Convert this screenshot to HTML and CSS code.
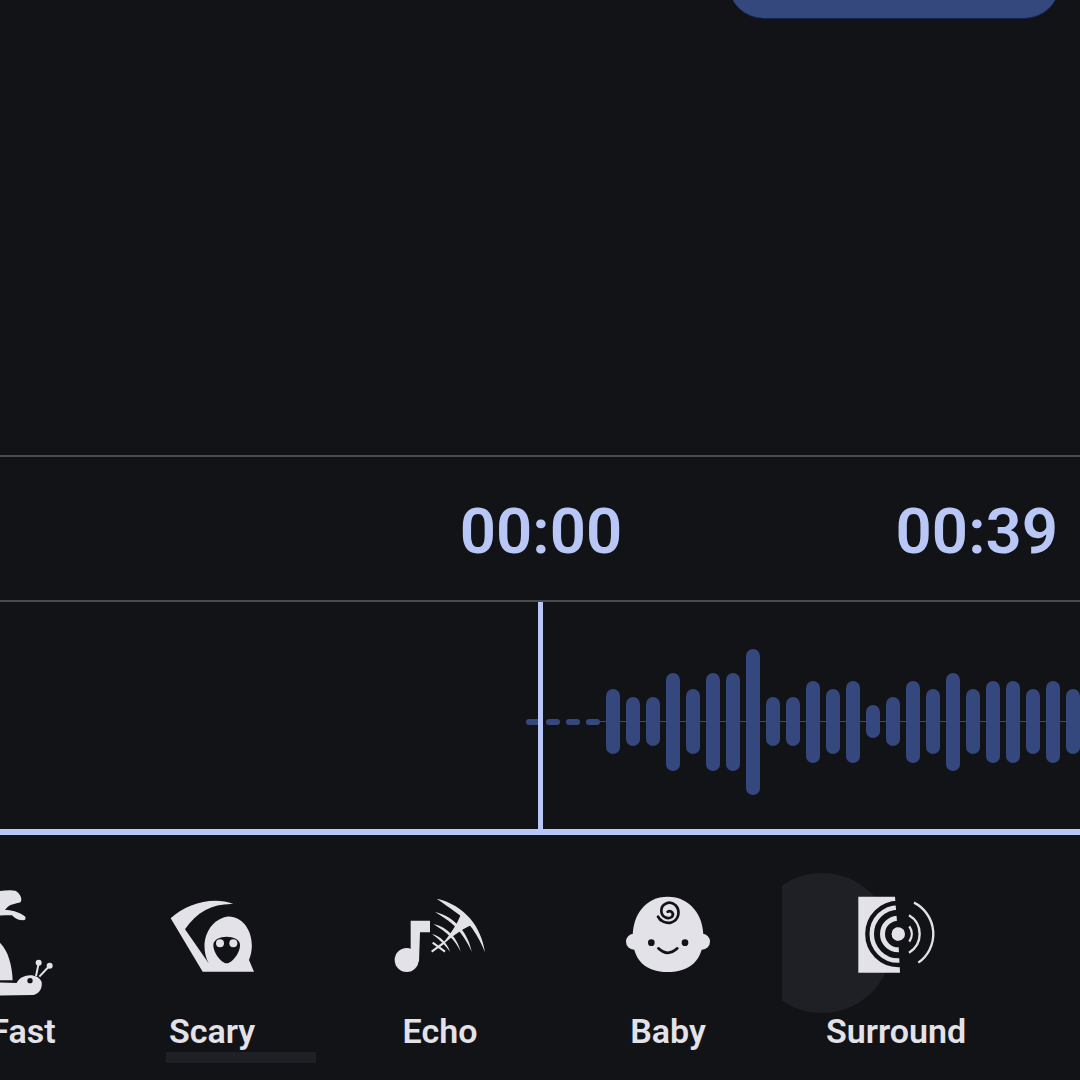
FILE: index.html
```html
<!DOCTYPE html>
<html lang="en">
<head>
  <meta charset="UTF-8" />
  <meta name="viewport" content="width=device-width, initial-scale=1.0" />
  <title>Voice Effects</title>
  <link rel="stylesheet" href="styles.css">
</head>
<body>

<div class="top-btn"></div>

<div class="timebar">
  <span></span>
  <span class="time">00:00</span>
  <span class="time end">00:39</span>
</div>

<div class="wave">
  <div class="midline"></div>
  <i class="dash"></i><i class="dash"></i><i class="dash"></i><i class="dash"></i>
  <i class="bar h65"></i><i class="bar h49"></i><i class="bar h49"></i><i class="bar h98"></i>
  <i class="bar h65"></i><i class="bar h98"></i><i class="bar h98"></i><i class="bar h146"></i>
  <i class="bar h49"></i><i class="bar h49"></i><i class="bar h82"></i><i class="bar h65"></i>
  <i class="bar h82"></i><i class="bar h33"></i><i class="bar h49"></i><i class="bar h82"></i>
  <i class="bar h65"></i><i class="bar h98"></i><i class="bar h65"></i><i class="bar h82"></i>
  <i class="bar h82"></i><i class="bar h65"></i><i class="bar h82"></i><i class="bar h65"></i>
  <div class="playhead"></div>
</div>

<div class="effects">
  <div class="effect fast">
    <svg class="icon" viewBox="-111 45 360 360">
      <path d="M-20 68 C0 62 30 58 46 62 C60 70 68 85 62 96 C50 102 35 100 22 112 L15 120 C32 120 54 124 76 140 C78 148 74 152 68 150 C58 152 45 146 36 136 C20 135 0 138 -20 135 Z" />
      <path d="M-20 205 C20 222 36 280 38 331 L-20 331 Z" />
      <path d="M-20 337 L50 339 C62 312 112 306 125 336 C128 358 115 373 100 375 L-20 377 Z" />
      <circle class="cut" cx="90" cy="332" r="8" />
      <path class="thin" d="M108 318 L116 280 M118 320 L148 288" />
      <circle cx="116" cy="278" r="9" />
      <circle cx="149" cy="287" r="9" />
    </svg>
    <div class="label">Fast</div>
  </div>

  <div class="effect scary">
    <svg class="icon" viewBox="456 45 360 360">
      <path d="M512 145 C560 100 640 78 700 102 C640 100 590 125 555 178 L626 280 C595 220 625 150 680 140 C740 135 772 210 747 270 L762 305 L608 305 Z" />
      <path class="cut" d="M640 225 C640 192 720 192 720 225 C720 250 695 280 680 280 C665 280 640 250 640 225 Z" />
      <circle cx="660" cy="220" r="12" />
      <circle cx="700" cy="220" r="12" />
    </svg>
    <div class="label">Scary</div>
    <div class="underline"></div>
  </div>

  <div class="effect">
    <svg class="icon" viewBox="30 45 360 360">
      <circle cx="110" cy="270" r="36" />
      <path d="M122 152 H180 V187 H150 L147 275 L122 262 Z" />
      <path d="M200 86 C285 105 335 172 345 247 C325 195 295 150 255 125 C235 110 220 100 200 86 Z" />
      <path d="M195 126 C255 140 295 190 305 245 C285 200 260 170 235 152 C220 142 208 134 195 126 Z" />
      <path d="M190 162 C235 172 262 205 272 245 C255 210 235 190 190 162 Z" />
      <path d="M186 192 C212 198 232 220 240 245 C225 225 210 210 186 192 Z" />
      <path d="M205 235 C235 200 260 170 275 125 L305 165 C270 180 240 205 205 235 Z" />
      <path class="thin" d="M188 218 L225 245 M185 245 L222 218" />
    </svg>
    <div class="label">Echo</div>
  </div>

  <div class="effect">
    <svg class="icon" viewBox="714 45 360 360">
      <circle cx="792" cy="215" r="24" />
      <circle cx="996" cy="215" r="24" />
      <path d="M893 80 C960 80 1000 135 1000 200 C1000 270 960 306 893 306 C826 306 788 270 788 200 C788 135 826 80 893 80 Z" />
      <circle class="cut" cx="844" cy="218" r="10" />
      <circle class="cut" cx="945" cy="218" r="10" />
      <path class="line" d="M865 235 Q893 262 922 235" />
      <path class="line" d="M893 125 C905 120 914 132 905 141 C893 150 874 140 874 122 C874 102 898 90 916 105 C932 122 928 150 902 158 C887 161 870 153 864 140" />
    </svg>
    <div class="label">Baby</div>
  </div>

  <div class="effect surround">
    <div class="ripple"></div>
    <svg class="icon" viewBox="198 75 360 360">
      <path d="M265 110 H375 L384 222 L390 338 H265 Z" />
      <g class="rings">
        <circle class="r1" cx="385" cy="222" r="30" />
        <circle class="r2" cx="385" cy="222" r="64" />
        <circle class="r3" cx="385" cy="222" r="93" />
      </g>
      <circle cx="385" cy="222" r="20" />
      <path class="arc" d="M418 199 A40 40 0 0 1 418 245" />
      <path class="arc" d="M417 166 A65 65 0 0 1 417 278" />
      <path class="arc" d="M432 128 A105 105 0 0 1 445 308" />
    </svg>
    <div class="label">Surround</div>
  </div>
</div>

</body>
</html>
```

FILE: styles.css
```css
body {
  margin: 0;
  padding: 0;
  height: 1080px;
  overflow: hidden;
  background: #121317;
  font-family: Roboto, sans-serif;
  display: flex;
  flex-direction: column;
}

.top-btn {
  flex: none;
  align-self: flex-end;
  width: 332px;
  height: 72px;
  margin-top: -54px;
  margin-right: 20px;
  margin-bottom: 437px;
  background: #34487d;
  border-radius: 36px;
  box-shadow: 0 1px 0 #14244f;
}

.timebar {
  flex: none;
  display: grid;
  grid-template-columns: 1fr auto 1fr;
  align-items: center;
  box-sizing: border-box;
  height: 147px;
  padding: 5px 22px 0 24px;
  border-top: 2px solid #4a4b4f;
  border-bottom: 2px solid #4a4b4f;
}

.time {
  font-size: 63.5px;
  font-weight: 600;
  color: #b9c7f7;
}

.time.end {
  justify-self: end;
}

.wave {
  flex: none;
  position: relative;
  display: flex;
  align-items: center;
  gap: 6px;
  height: 215px;
  padding: 12px 0 0 526px;
  overflow: hidden;
  border-bottom: 6px solid #b9c7f7;
}

.midline {
  position: absolute;
  left: 600px;
  right: 0;
  top: 119px;
  height: 1px;
  background: #3a4a78;
}

.dash {
  flex: none;
  width: 14px;
  height: 6px;
  border-radius: 3px;
  background: #34487d;
}

.bar {
  flex: none;
  position: relative;
  width: 14px;
  border-radius: 7px;
  background: #34487d;
}

.h33 { height: 33px; }
.h49 { height: 49px; }
.h65 { height: 65px; }
.h82 { height: 82px; }
.h98 { height: 98px; }
.h146 { height: 146px; }

.playhead {
  position: absolute;
  left: 538px;
  top: 0;
  bottom: 0;
  width: 5px;
  background: #b9c7f7;
}

.effects {
  flex: 1;
  display: flex;
  margin-left: -52px;
  padding-top: 30px;
}

.effect {
  flex: none;
  position: relative;
  width: 228px;
  height: 215px;
  display: flex;
  flex-direction: column;
  align-items: center;
}

.effect.fast {
  width: 150px;
}

.icon {
  position: relative;
  width: 120px;
  height: 120px;
  margin-top: 20px;
  fill: #e3e2e8;
}

.icon .cut {
  fill: #121317;
}

.icon .thin {
  fill: none;
  stroke: #e3e2e8;
  stroke-width: 6;
}

.icon .line {
  fill: none;
  stroke: #121317;
  stroke-width: 8;
  stroke-linecap: round;
}

.icon .arc {
  fill: none;
  stroke: #e3e2e8;
  stroke-width: 7;
}

.icon .rings {
  fill: none;
  stroke: #121317;
}

.icon .r1 { stroke-width: 20; }
.icon .r2 { stroke-width: 18; }
.icon .r3 { stroke-width: 13; }

.label {
  position: relative;
  margin-top: 8px;
  font-size: 34px;
  line-height: 36px;
  font-weight: 600;
  color: #e3e2e8;
}

.underline {
  position: absolute;
  left: 68px;
  top: 187px;
  width: 150px;
  height: 11px;
  background: #1e2026;
}

.surround {
  overflow: hidden;
}

.ripple {
  position: absolute;
  left: -30px;
  top: 8px;
  width: 140px;
  height: 140px;
  border-radius: 50%;
  background: #1e2026;
}
```
